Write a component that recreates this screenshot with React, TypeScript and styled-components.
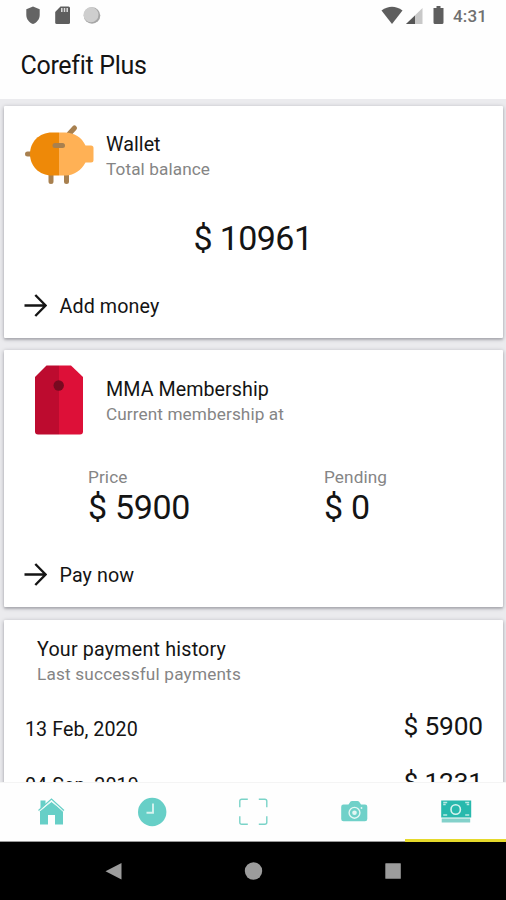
import React from 'react';
import styled, { createGlobalStyle } from 'styled-components';

const GlobalStyle = createGlobalStyle`
  * { box-sizing: border-box; }
  body { margin: 0; background: #ebebee; }
  svg { display: block; }
`;

const Screen = styled.div`
  width: 506px;
  height: 900px;
  display: flex;
  flex-direction: column;
  overflow: hidden;
  background: #ebebee;
  font-family: Roboto, sans-serif;
  color: #141414;
`;

const Header = styled.header`
  flex: none;
  height: 99px;
  background: #fefefe;
`;

const StatusBar = styled.div`
  height: 32px;
  padding: 0 20px 0 25px;
  display: flex;
  align-items: center;
  justify-content: space-between;
`;

const StatusGroup = styled.div`
  display: flex;
  align-items: center;
`;

const Clock = styled.span`
  margin-left: 8px;
  width: 33px;
  font-size: 17px;
  line-height: 32px;
  font-weight: 500;
  letter-spacing: 0.15px;
  color: #707070;
`;

const Title = styled.h1`
  margin: 0;
  padding: 19px 0 0 20.5px;
  font-size: 25px;
  line-height: 30px;
  font-weight: 400;
  letter-spacing: -0.3px;
`;

const Content = styled.main`
  flex: 1;
  min-height: 0;
  overflow: hidden;
  padding: 7px 3px 0 4px;
  display: flex;
  flex-direction: column;
`;

const Card = styled.section<{ $height: number; $gap?: number }>`
  flex: none;
  height: ${(p) => p.$height}px;
  margin-bottom: ${(p) => p.$gap ?? 0}px;
  background: #fff;
  border-radius: 1px;
  box-shadow: 0 1px 4px rgba(20, 20, 30, 0.3), 0 2px 2px rgba(20, 20, 30, 0.12);
`;

const CardHead = styled.div`
  height: 98px;
  padding: 15px 0 0 20px;
  display: grid;
  grid-template-columns: 82px 1fr;
`;

const HeadText = styled.div<{ $top: number }>`
  padding-top: ${(p) => p.$top}px;
`;

const CardTitle = styled.h2<{ $tracking?: number }>`
  margin: 0;
  font-size: 19.7px;
  line-height: 25px;
  font-weight: 400;
  letter-spacing: ${(p) => p.$tracking ?? 0.05}px;
`;

const Caption = styled.p<{ $tracking?: number }>`
  margin: 0;
  font-size: 17.2px;
  line-height: 25px;
  letter-spacing: ${(p) => p.$tracking ?? 0.1}px;
  color: #858585;
`;

const Balance = styled.div`
  height: 70px;
  padding-left: 189.5px;
  font-size: 34px;
  line-height: 69px;
  letter-spacing: -0.6px;
`;

const Figures = styled.div`
  height: 94px;
  padding: 17px 0 0 84px;
  display: grid;
  grid-template-columns: 236px 1fr;
`;

const FigureValue = styled.div`
  font-size: 34px;
  line-height: 35px;
  letter-spacing: -0.3px;
`;

const Action = styled.button<{ $drop?: number }>`
  height: 64px;
  padding: ${(p) => p.$drop ?? 0}px 0 0 19px;
  border: 0;
  background: none;
  display: flex;
  align-items: center;
  gap: 12.5px;
  font: 400 19.7px/26px Roboto, sans-serif;
  letter-spacing: 0.1px;
  color: #141414;
`;

const ActionLabel = styled.span`
  padding-top: 2px;
`;

const HistoryHead = styled.div`
  height: 81px;
  padding: 17px 0 0 33px;
`;

const HistoryRow = styled.div`
  height: 56px;
  padding: 0 20px 0 21px;
  display: flex;
  justify-content: space-between;
  align-items: center;
  font-size: 19.7px;
  letter-spacing: 0.05px;
`;

const RowAmount = styled.span`
  font-size: 26.3px;
  letter-spacing: -0.15px;
  margin-top: -6px;
`;

const TabBar = styled.nav`
  flex: none;
  height: 60px;
  display: grid;
  grid-template-columns: repeat(5, 1fr);
  background: #fefefe;
  border-top: 1px solid #f4f4f4;
`;

const Tab = styled.button<{ $active?: boolean }>`
  padding: 13px 0 0 2px;
  border: 0;
  border-bottom: ${(p) => (p.$active ? '3px solid #e5d92b' : '1px solid #999')};
  background: none;
  display: flex;
  justify-content: center;
  align-items: flex-start;
`;

const SystemBar = styled.footer`
  flex: none;
  height: 58px;
  padding: 0 43px;
  display: grid;
  grid-template-columns: repeat(3, 1fr);
  justify-items: center;
  align-items: center;
  background: #000;
`;

const SystemIcons = {
  back: <path d="M19.500 3v16.500L3.500 11.200z" />,
  home: <circle cx="11.500" cy="11" r="8.700" />,
  recent: <rect x="3.300" y="3.300" width="15.500" height="15.500" rx=".5" />,
};

const Arrow = () => (
  <svg width="24" height="26" viewBox="0 0 24 26" fill="none" stroke="#151515" strokeWidth="2.4">
    <path d="M1.500 12.500h21M12.300 2 22.600 12.500 12.300 23" />
  </svg>
);

const PiggyBank = () => (
  <svg width="72" height="66" viewBox="0 0 72 66">
    <path d="M45 13l5.500-6" stroke="#a8804f" strokeWidth="5" strokeLinecap="round" />
    <path d="M27 44v16.500M42.500 44v16.500" stroke="#a8804f" strokeWidth="5" strokeLinecap="round" />
    <path d="M3.500 33H9" stroke="#a8804f" strokeWidth="5" strokeLinecap="round" />
    <path d="M35 11.500h6c9 0 17 5 20.500 13H67q2.500 0 2.500 2.500v12q0 2.500-2.500 2.500h-5.500C57.500 49 50 54.500 42 54.500h-7z" fill="#ffb155" />
    <path d="M35 11.500h-7c-13 0-22 9.500-22 21.500s9 21.500 22 21.500h7z" fill="#ee8908" />
    <path d="M31 24.500h7.500" stroke="#a8804f" strokeWidth="5" strokeLinecap="round" />
  </svg>
);

const Tag = () => (
  <svg width="72" height="70" viewBox="0 0 72 70">
    <path d="M35 .5H22.500L11 12v54.500q0 3 3 3h21z" fill="#bd0b2f" />
    <path d="M35 .5h12L59 12v54.500q0 3-3 3H35z" fill="#dd1038" />
    <circle cx="34.700" cy="20.500" r="5.200" fill="#770a20" />
  </svg>
);

const tabs = [
  {
    name: 'Home',
    icon: (
      <g>
        <path fill="#67cfc7" d="M4 15 15.500 6l11.500 9v13.500h-8v-9.500h-7v9.500H4zM4.500 4.500h5v4l-5 4z" />
        <path d="M2.500 14.500 15.500 3l12.500 11.500" fill="none" stroke="#67cfc7" strokeWidth="1.200" />
        <path d="M3 15.800 15.500 5l12 10.800" fill="none" stroke="#e6f8f5" strokeWidth=".9" />
      </g>
    ),
  },
  {
    name: 'Schedule',
    icon: (
      <g>
        <circle cx="15.200" cy="16" r="14.200" fill="#67cfc7" />
        <path d="M16 7.500v9.300H9.500" fill="none" stroke="#d7f3ef" strokeWidth="1.900" />
      </g>
    ),
  },
  {
    name: 'Scan',
    icon: (
      <path
        d="M9.800 3.200h-6q-2 0-2 2v6M20.800 3.200h6q2 0 2 2v6M9.800 28.200h-6q-2 0-2-2v-6M20.800 28.200h6q2 0 2-2v-6"
        fill="none"
        stroke="#7ad3c8"
        strokeWidth="1.400"
      />
    ),
  },
  {
    name: 'Photos',
    icon: (
      <g>
        <path fill="#70d1c9" d="M4.500 8.500h5l2-3q.7-.5 1.500-.5h5.500q.8 0 1.500.5l2 3h4q2.300 0 2.300 2.300v12.200q0 2.300-2.300 2.300H4.500q-2.300 0-2.300-2.300V10.800Q2.200 8.500 4.500 8.500z" />
        <circle cx="15.500" cy="16.800" r="5.400" fill="none" stroke="#e4f7f4" strokeWidth="1.400" />
        <circle cx="15.500" cy="16.800" r="2.300" fill="#e4f7f4" />
        <circle cx="22.500" cy="12" r=".9" fill="#e4f7f4" />
      </g>
    ),
  },
  {
    name: 'Payments',
    icon: (
      <g transform="translate(1.200 0)">
        <path fill="#28b9ad" d="M0 4.500h30v17H0z" />
        <path fill="#83d1ca" d="M.5 22.500h28.500v4H.5z" />
        <circle cx="14.500" cy="13.500" r="4.700" fill="none" stroke="#d7f3ef" strokeWidth="1.600" />
        <path d="M2 6.500h4M2 8.500h2.500M28 6.500h-4M28 8.500h-2.500M2 19h4M28 19h-4" stroke="#b9e9e4" strokeWidth="1.600" />
      </g>
    ),
  },
];

const history = [
  { date: '13 Feb, 2020', amount: '$ 5900' },
  { date: '04 Sep, 2019', amount: '$ 1231' },
];

export default function App() {
  return (
    <Screen>
      <GlobalStyle />
      <Header>
        <StatusBar>
          <StatusGroup>
            <svg width="76" height="20" viewBox="0 0 76 20">
              <path d="M8 .5 14.700 3.300v5.700c0 4.300-3 7.700-6.700 9C4.300 16.700 1.300 13.300 1.300 9V3.300z" fill="#646464" />
              <path d="M35.500 .5h8q1.500 0 1.500 1.500v14.500q0 1.500-1.500 1.500H31.700q-1.500 0-1.500-1.500V6z" fill="#5e5e5e" />
              <path d="M36.800 2v4M39.500 2v4M42.200 2v4" stroke="#ddd" strokeWidth="1.500" />
              <circle cx="67" cy="9.500" r="8.300" fill="#a6a6a6" />
              <circle cx="66" cy="8.700" r="7.500" fill="#cecece" />
            </svg>
          </StatusGroup>
          <StatusGroup>
            <svg width="64" height="20" viewBox="0 0 64 20">
              <path d="M.5 4.500Q11 -3 21.500 4.500L11 18z" fill="#5e5e5e" />
              <path d="M41.500 2v16H25z" fill="#c8c8c8" />
              <path d="M34 9.500V18H25z" fill="#555" />
              <path d="M52.500 2h3V0h4v2h3v14.500q0 1.500-1.500 1.500h-7q-1.500 0-1.500-1.500z" fill="#5e5e5e" />
            </svg>
            <Clock>4:31</Clock>
          </StatusGroup>
        </StatusBar>
        <Title>Corefit Plus</Title>
      </Header>

      <Content>
        <Card $height={232} $gap={12}>
          <CardHead>
            <PiggyBank />
            <HeadText $top={11}>
              <CardTitle>Wallet</CardTitle>
              <Caption>Total balance</Caption>
            </HeadText>
          </CardHead>
          <Balance>$ 10961</Balance>
          <Action>
            <Arrow />
            <ActionLabel>Add money</ActionLabel>
          </Action>
        </Card>

        <Card $height={257} $gap={13}>
          <CardHead>
            <Tag />
            <HeadText $top={12}>
              <CardTitle>MMA Membership</CardTitle>
              <Caption>Current membership at</Caption>
            </HeadText>
          </CardHead>
          <Figures>
            <div>
              <Caption>Price</Caption>
              <FigureValue>$ 5900</FigureValue>
            </div>
            <div>
              <Caption>Pending</Caption>
              <FigureValue>$ 0</FigureValue>
            </div>
          </Figures>
          <Action $drop={2}>
            <Arrow />
            <ActionLabel>Pay now</ActionLabel>
          </Action>
        </Card>

        <Card $height={240}>
          <HistoryHead>
            <CardTitle $tracking={0.2}>Your payment history</CardTitle>
            <Caption $tracking={0.18}>Last successful payments</Caption>
          </HistoryHead>
          {history.map((row) => (
            <HistoryRow key={row.date}>
              <span>{row.date}</span>
              <RowAmount>{row.amount}</RowAmount>
            </HistoryRow>
          ))}
        </Card>
      </Content>

      <TabBar>
        {tabs.map((tab) => (
          <Tab key={tab.name} aria-label={tab.name} $active={tab.name === 'Payments'}>
            <svg width="32" height="31" viewBox="0 0 32 31">
              {tab.icon}
            </svg>
          </Tab>
        ))}
      </TabBar>

      <SystemBar>
        {Object.entries(SystemIcons).map(([name, shape]) => (
          <svg key={name} width="23" height="23" viewBox="0 0 23 23" fill="#9c9c9c">
            {shape}
          </svg>
        ))}
      </SystemBar>
    </Screen>
  );
}
